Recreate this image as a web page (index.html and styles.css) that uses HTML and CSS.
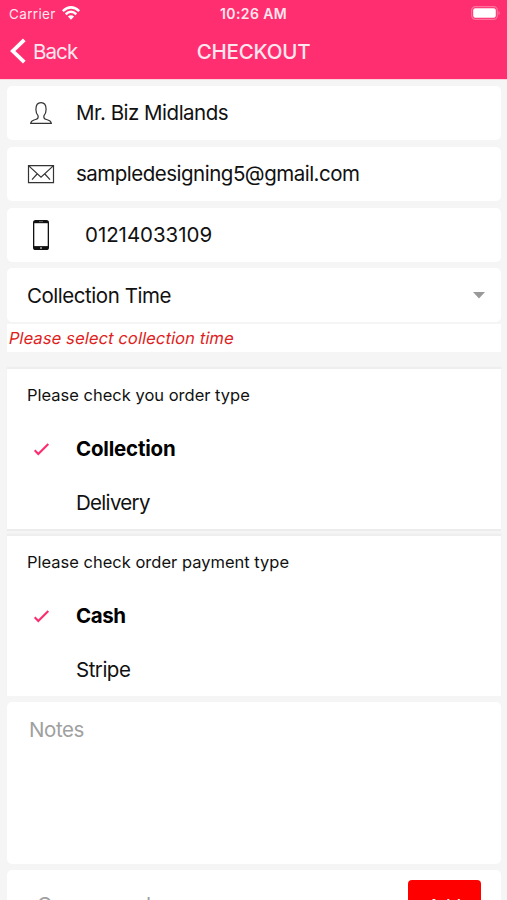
FILE: index.html
```html
<!DOCTYPE html>
<html lang="en">
<head>
<meta charset="utf-8">
<title>Checkout</title>
<link rel="stylesheet" href="styles.css">
</head>
<body>
<header class="header">
  <div class="status">
    <div class="carrier"><span>Carrier</span>
      <svg width="18" height="14" viewBox="0 0 18 14" fill="none" stroke="#fff" stroke-width="2.5"><path d="M.8 5.1Q9-2.3 17.2 5.1M3.7 8.2Q9 3.4 14.3 8.2"/><path d="M9 13.7 5.9 10.6Q9 7.9 12.1 10.6Z" fill="#fff" stroke="none"/></svg>
    </div>
    <span class="clock">10:26 AM</span>
    <svg class="battery" width="30" height="14" viewBox="0 0 30 14"><rect x=".7" y=".7" width="25.6" height="12.6" rx="3.6" fill="none" stroke="#ff709a" stroke-width="1.2"/><rect x="2.2" y="2.3" width="22.6" height="9.4" rx="2" fill="#fff"/><path d="M27.6 4.7q2 2.3 0 4.6z" fill="#ff8bad"/></svg>
  </div>
  <nav class="nav">
    <a class="back"><svg width="16" height="26" viewBox="0 0 16 26" fill="none" stroke="#fff" stroke-width="3.8"><path d="M14.3 1.8 2.8 13l11.5 11.2"/></svg><span>Back</span></a>
    <h1 class="title">CHECKOUT</h1>
  </nav>
</header>
<main class="form">
  <section class="card field">
    <svg class="icon" width="28" height="28" viewBox="0 0 28 28" fill="none" stroke="#333" stroke-width="1.2"><path d="M3.7 24.3c.3-2.8 2.2-3 4.9-3.8 2.3-.7 3-1.9 2.4-3.9-1.4-1.7-2.1-3.7-2.1-6.2 0-4.5 1.8-6.7 5.1-6.7s5.1 2.2 5.1 6.7c0 2.5-.7 4.5-2.1 6.2-.6 2 .1 3.2 2.4 3.9 2.7.8 4.6 1 4.9 3.8z"/></svg>
    <span class="text name">Mr. Biz Midlands</span>
  </section>
  <section class="card field">
    <svg class="icon" width="28" height="28" viewBox="0 0 28 28" fill="none" stroke="#333" stroke-width="1.2"><path d="M1.5 5.6h25v17H1.5zM1.5 5.6 14 17.2 26.5 5.6M5 19.6l5.1-5.6M23 19.6 17.9 14"/></svg>
    <span class="text email">sampledesigning5@gmail.com</span>
  </section>
  <section class="card field">
    <svg class="icon" width="28" height="32" viewBox="0 0 28 32"><rect x="6" y="1" width="16" height="30" rx="2.6" fill="#111"/><path d="M7.3 4.2h13.4v22.9H7.3z" fill="#fff"/><path d="M12 2.6h4" stroke="#888" stroke-width=".7"/><circle cx="14" cy="29" r="1" fill="#aaa"/></svg>
    <span class="text phone">01214033109</span>
  </section>
  <section class="card select">
    <span class="text time">Collection Time</span>
    <svg width="12" height="7" viewBox="0 0 12 7"><path d="M0 0h12L6 6.5z" fill="#999"/></svg>
  </section>
  <p class="error"><span>Please select collection time</span></p>
  <section class="group order">
    <h2 class="label">Please check you order type</h2>
    <div class="option chosen"><svg class="icon" width="28" height="20" viewBox="0 0 28 20" fill="none" stroke="#fd2c6e" stroke-width="2.1"><path d="m7.7 11.3 3.6 3.7L21.3 5.1"/></svg><span class="text collection">Collection</span></div>
    <div class="option"><i class="icon"></i><span class="text delivery">Delivery</span></div>
  </section>
  <section class="group payment">
    <h2 class="label">Please check order payment type</h2>
    <div class="option chosen"><svg class="icon" width="28" height="20" viewBox="0 0 28 20" fill="none" stroke="#fd2c6e" stroke-width="2.1"><path d="m7.7 11.3 3.6 3.7L21.3 5.1"/></svg><span class="text cash">Cash</span></div>
    <div class="option"><i class="icon"></i><span class="text stripe">Stripe</span></div>
  </section>
  <section class="card notes"><span class="text hint">Notes</span></section>
  <section class="card coupon">
    <span class="text hint">Coupon code</span>
    <button class="add">Add</button>
  </section>
</main>
</body>
</html>
```
FILE: styles.css
```css
* { box-sizing: border-box; }
body { margin: 0; height: 900px; overflow: hidden; background: #f5f5f5; color: #111; font-family: Inter, "Liberation Sans", sans-serif; }
.header { height: 80px; background: #ff2e70; border-bottom: 1px solid #fbd3df; color: #ffe6ee; }
.status { height: 27px; display: grid; grid-template-columns: 1fr auto 1fr; align-items: center; padding: 0 6px 0 9px; font-size: 13.5px; }
.carrier { display: flex; align-items: center; gap: 6px; letter-spacing: .35px; }
.carrier svg { margin-top: -2px; }
.clock { font-size: 14px; font-weight: 600; letter-spacing: .4px; margin-right: 3px; }
.battery { justify-self: end; margin-top: -1px; }
.nav { height: 49px; display: grid; grid-template-columns: 1fr auto 1fr; align-items: center; padding: 0 10px; }
.back { display: flex; align-items: center; gap: 7px; font-size: 20.5px; letter-spacing: -.9px; }
.back svg { margin-top: -2px; }
.title { margin: 0; font-size: 20.5px; font-weight: 500; letter-spacing: -.2px; }
.form { display: flex; flex-direction: column; padding: 6px 6px 0 7px; }
.card { flex: none; background: #fff; border-radius: 5px; margin-bottom: 7px; }
.field { height: 54px; display: flex; align-items: center; padding-left: 20px; }
.icon { flex: none; width: 28px; }
.text { font-size: 20.5px; line-height: 24px; letter-spacing: -.5px; white-space: nowrap; }
.field .text, .option .text { margin-left: 21px; }
.field .phone { margin-left: 30px; letter-spacing: -.05px; }
.time { letter-spacing: -.46px; padding-top: 1px; }
.select { height: 54px; margin: -1px 0 2px; display: flex; align-items: center; justify-content: space-between; padding: 0 16px 0 20px; }
.error { margin: 0; height: 28px; background: #fff; padding-left: 2px; color: #e01e22; font-size: 16.5px; letter-spacing: .12px; line-height: 29px; }
.error span { display: inline-block; transform: skewX(-11deg); }
.group { background: #fff; }
.order { margin-top: 17px; height: 162px; border-bottom: 2px solid #ececec; box-shadow: 0 -2px 1px #eeeeee; }
.payment { margin: 5px 0 6px; height: 160px; box-shadow: 0 -2px 1px #eeeeee; }
.label { margin: 0; height: 53px; padding: 0 20px; font-size: 16.5px; font-weight: 400; line-height: 53px; }
.option { height: 54px; display: flex; align-items: center; padding-left: 20px; }
.chosen .text { font-weight: 700; color: #000; letter-spacing: -.4px; }
.option .collection { letter-spacing: -.2px; }
.option .delivery { letter-spacing: -.7px; }
.notes { height: 162px; padding: 16px 22px; margin-bottom: 6px; }
.hint { color: #a0a0a0; letter-spacing: -.4px; }
.coupon { height: 70px; display: flex; align-items: center; justify-content: space-between; padding: 0 20px 0 30px; }
.coupon .hint { letter-spacing: -.52px; }
.add { width: 73px; height: 50px; padding: 2px 0 0; border: 0; border-radius: 4px; background: #f00; color: #fff; font: 500 17px Inter, sans-serif; }
```
